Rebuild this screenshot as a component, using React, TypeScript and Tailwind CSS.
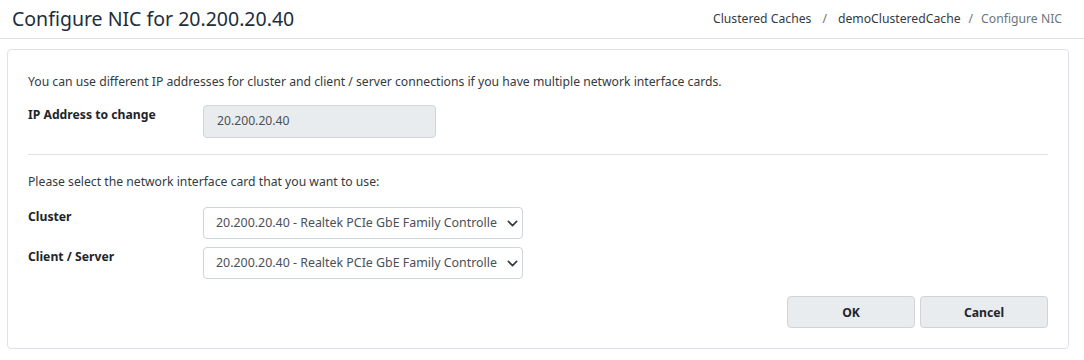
import React from "react";

const font = { fontFamily: '"Noto Sans", "Open Sans", sans-serif' };

const Chevron = () => (
  <svg width="11" height="11" viewBox="0 0 16 16" className="text-[#343a40] shrink-0">
    <path d="M2 5l6 6 6-6" fill="none" stroke="currentColor" strokeWidth="2.4" strokeLinecap="round" strokeLinejoin="round" />
  </svg>
);

const NicSelect: React.FC<{ value: string }> = ({ value }) => (
  <div className="w-[320px] h-[32px] border border-[#ced4da] rounded-[4px] bg-white flex items-center justify-between pl-[12px] pr-[4px] text-[12.4px] text-[#495057]">
    <span className="whitespace-nowrap">{value}</span>
    <Chevron />
  </div>
);

export default function App() {
  const nic = "20.200.20.40 - Realtek PCIe GbE Family Controlle";
  return (
    <div className="w-[1084px] h-[360px] bg-white text-[#212529]" style={font}>
      <div className="h-[39px] border-b border-[#dee2e6] flex items-center justify-between pl-[12px] pr-[22px]">
        <h1 className="text-[19.5px] text-[#212d3b] leading-none">Configure NIC for 20.200.20.40</h1>
        <div className="flex items-center text-[12.2px] gap-[8px]">
          <span className="text-[#343a40]">Clustered Caches</span>
          <span className="text-[#6c757d] px-[3px]">/</span>
          <span className="text-[#343a40]">demoClusteredCache</span>
          <span className="text-[#6c757d]">/</span>
          <span className="text-[#6c757d]">Configure NIC</span>
        </div>
      </div>
      <div className="mt-[10px] ml-[7px] w-[1062px] h-[300px] border border-[#dee2e6] rounded-[4px] px-[20px] pt-[22px] pb-[20px]">
        <p className="text-[12.2px] leading-[20px] text-[#343a40]">
          You can use different IP addresses for cluster and client / server connections if you have multiple network interface cards.
        </p>
        <div className="flex mt-[13px]">
          <div className="w-[175px] text-[12.2px] font-bold pt-[1px]">IP Address to change</div>
          <div className="w-[233px] h-[33px] bg-[#e9ecef] border border-[#ced4da] rounded-[4px] flex items-center pl-[13px] text-[12.2px] text-[#495057]">
            20.200.20.40
          </div>
        </div>
        <div className="border-t border-[#dee2e6] mt-[16px]" />
        <p className="text-[12.2px] leading-[20px] text-[#343a40] mt-[17px]">
          Please select the network interface card that you want to use:
        </p>
        <div className="flex mt-[15px]">
          <div className="w-[175px] text-[12.2px] font-bold pt-[1px]">Cluster</div>
          <NicSelect value={nic} />
        </div>
        <div className="flex mt-[8px]">
          <div className="w-[175px] text-[12.2px] font-bold pt-[1px]">Client / Server</div>
          <NicSelect value={nic} />
        </div>
        <div className="flex justify-end gap-[5px] mt-[17px]">
          <button className="w-[128px] h-[32px] bg-[#e9ecef] border border-[#ced4da] rounded-[4px] text-[12.2px] font-bold text-[#212529] pt-[2px]">
            OK
          </button>
          <button className="w-[128px] h-[32px] bg-[#e9ecef] border border-[#ced4da] rounded-[4px] text-[12.2px] font-bold text-[#212529] pt-[2px]">
            Cancel
          </button>
        </div>
      </div>
    </div>
  );
}
